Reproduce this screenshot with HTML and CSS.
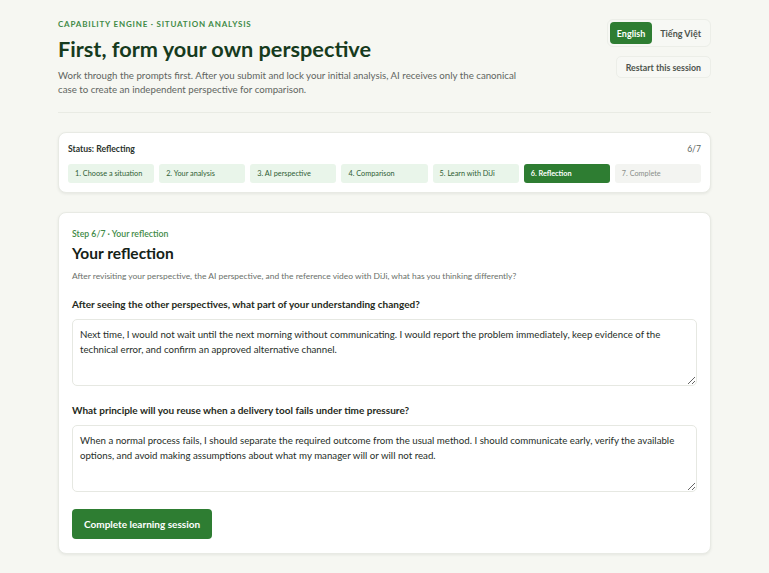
FILE: index.html
```html
<!DOCTYPE html>
<html lang="en">
<head>
<meta charset="utf-8">
<title>Capability Engine</title>
<link rel="stylesheet" href="styles.css">
</head>
<body>
<div class="page">
  <header class="header">
    <div class="intro">
      <div class="eyebrow">Capability Engine · Situation Analysis</div>
      <h1 class="title">First, form your own perspective</h1>
      <p class="lead">Work through the prompts first. After you submit and lock your initial analysis, AI receives only the canonical case to create an independent perspective for comparison.</p>
    </div>
    <div class="actions">
      <div class="lang">
        <button class="lang-btn active">English</button>
        <button class="lang-btn">Tiếng Việt</button>
      </div>
      <button class="restart">Restart this session</button>
    </div>
  </header>

  <section class="card status">
    <div class="status-top">
      <span class="status-label">Status: Reflecting</span>
      <span class="status-count">6/7</span>
    </div>
    <ol class="steps">
      <li class="step done">1. Choose a situation</li>
      <li class="step done">2. Your analysis</li>
      <li class="step done">3. AI perspective</li>
      <li class="step done">4. Comparison</li>
      <li class="step done">5. Learn with DiJi</li>
      <li class="step current">6. Reflection</li>
      <li class="step todo">7. Complete</li>
    </ol>
  </section>

  <section class="card main">
    <div class="step-tag">Step 6/7 · Your reflection</div>
    <h2 class="main-title">Your reflection</h2>
    <p class="desc">After revisiting your perspective, the AI perspective, and the reference video with DiJi, what has you thinking differently?</p>

    <label class="q" for="q1">After seeing the other perspectives, what part of your understanding changed?</label>
    <textarea id="q1" class="answer">Next time, I would not wait until the next morning without communicating. I would report the problem immediately, keep evidence of the technical error, and confirm an approved alternative channel.</textarea>

    <label class="q" for="q2">What principle will you reuse when a delivery tool fails under time pressure?</label>
    <textarea id="q2" class="answer last">When a normal process fails, I should separate the required outcome from the usual method. I should communicate early, verify the available options, and avoid making assumptions about what my manager will or will not read.</textarea>

    <button class="primary">Complete learning session</button>
  </section>
</div>
</body>
</html>
```
FILE: styles.css
```css
* { box-sizing: border-box; }
html, body { margin: 0; padding: 0; }
body {
  background: #f6f7f2;
  font-family: Lato, "Open Sans", sans-serif;
  color: #1f2a21;
}
.page {
  width: 653px;
  margin: 0 auto;
  padding: 19px 0 20px;
}
.header {
  display: flex;
  justify-content: space-between;
  align-items: flex-start;
  padding-bottom: 16px;
  border-bottom: 1px solid #e9ebe4;
}
.eyebrow {
  font-size: 8px;
  font-weight: 700;
  letter-spacing: 0.8px;
  text-transform: uppercase;
  color: #3f8a47;
  line-height: 10px;
}
.title {
  margin: 6px 0 5px;
  font-size: 21.7px;
  line-height: 28px;
  font-weight: 700;
  color: #163b1d;
}
.lead {
  margin: 0;
  width: 470px;
  font-size: 9.7px;
  line-height: 14px;
  color: #5f655f;
}
.actions {
  display: flex;
  flex-direction: column;
  align-items: flex-end;
  gap: 9px;
}
.lang {
  display: flex;
  padding: 2px;
  border: 1px solid #eceee8;
  border-radius: 6px;
  background: #f7f8f4;
  gap: 1px;
}
.lang-btn {
  font-family: inherit;
  font-size: 9px;
  font-weight: 700;
  border: 0;
  background: transparent;
  color: #4d544d;
  padding: 0 7px;
  height: 22px;
  border-radius: 4px;
}
.lang-btn.active {
  background: #2e7d32;
  color: #fff;
}
.restart {
  font-family: inherit;
  font-size: 8.8px;
  font-weight: 700;
  color: #4d544d;
  background: #f7f8f4;
  border: 1px solid #eceee8;
  border-radius: 5px;
  height: 22px;
  padding: 0 9px;
}
.card {
  background: #fff;
  border: 1px solid #e8eae4;
  border-radius: 8px;
  box-shadow: 0 1px 3px rgba(30, 40, 30, 0.08);
}
.status {
  margin-top: 19px;
  padding: 10px 9px 9px;
}
.status-top {
  display: flex;
  justify-content: space-between;
  font-size: 8.6px;
  line-height: 12px;
  color: #2a332b;
  font-weight: 700;
}
.status-count { color: #5c645d; font-weight: 400; }
.steps {
  list-style: none;
  margin: 9px 0 0;
  padding: 0;
  display: grid;
  grid-template-columns: repeat(7, 1fr);
  gap: 5px;
}
.step {
  height: 19px;
  display: flex;
  align-items: center;
  padding: 0 7px;
  font-size: 7.3px;
  border-radius: 3px;
  white-space: nowrap;
}
.step.done { background: #e9f5ea; color: #2f5e35; }
.step.current { background: #2e7d32; color: #fff; font-weight: 700; }
.step.todo { background: #f3f4f1; color: #8a8f8a; }
.main {
  margin-top: 19px;
  padding: 15px 13px 14px;
  display: flex;
  flex-direction: column;
  align-items: flex-start;
}
.step-tag {
  font-size: 8.7px;
  line-height: 11px;
  color: #3f8a47;
  font-weight: 600;
}
.main-title {
  margin: 4px 0 8px;
  font-size: 15.5px;
  line-height: 20px;
  font-weight: 700;
  color: #152217;
}
.desc {
  margin: 0 0 16px;
  font-size: 8.45px;
  line-height: 11px;
  color: #6a706a;
}
.q {
  display: block;
  font-size: 10px;
  line-height: 13px;
  font-weight: 700;
  color: #1f2a21;
  margin-bottom: 8px;
}
.answer {
  width: 100%;
  height: 67px;
  font-family: inherit;
  font-size: 9.7px;
  line-height: 15px;
  color: #262e27;
  border: 1px solid #e6e8e2;
  border-radius: 5px;
  padding: 7px 7px;
  resize: vertical;
  margin-bottom: 18px;
  background: #fff;
}
.answer.last { margin-bottom: 17px; }
.primary {
  font-family: inherit;
  background: #2e7d32;
  color: #fff;
  border: 0;
  border-radius: 4px;
  height: 30px;
  padding: 0 12px;
  font-size: 10px;
  font-weight: 700;
}
```
